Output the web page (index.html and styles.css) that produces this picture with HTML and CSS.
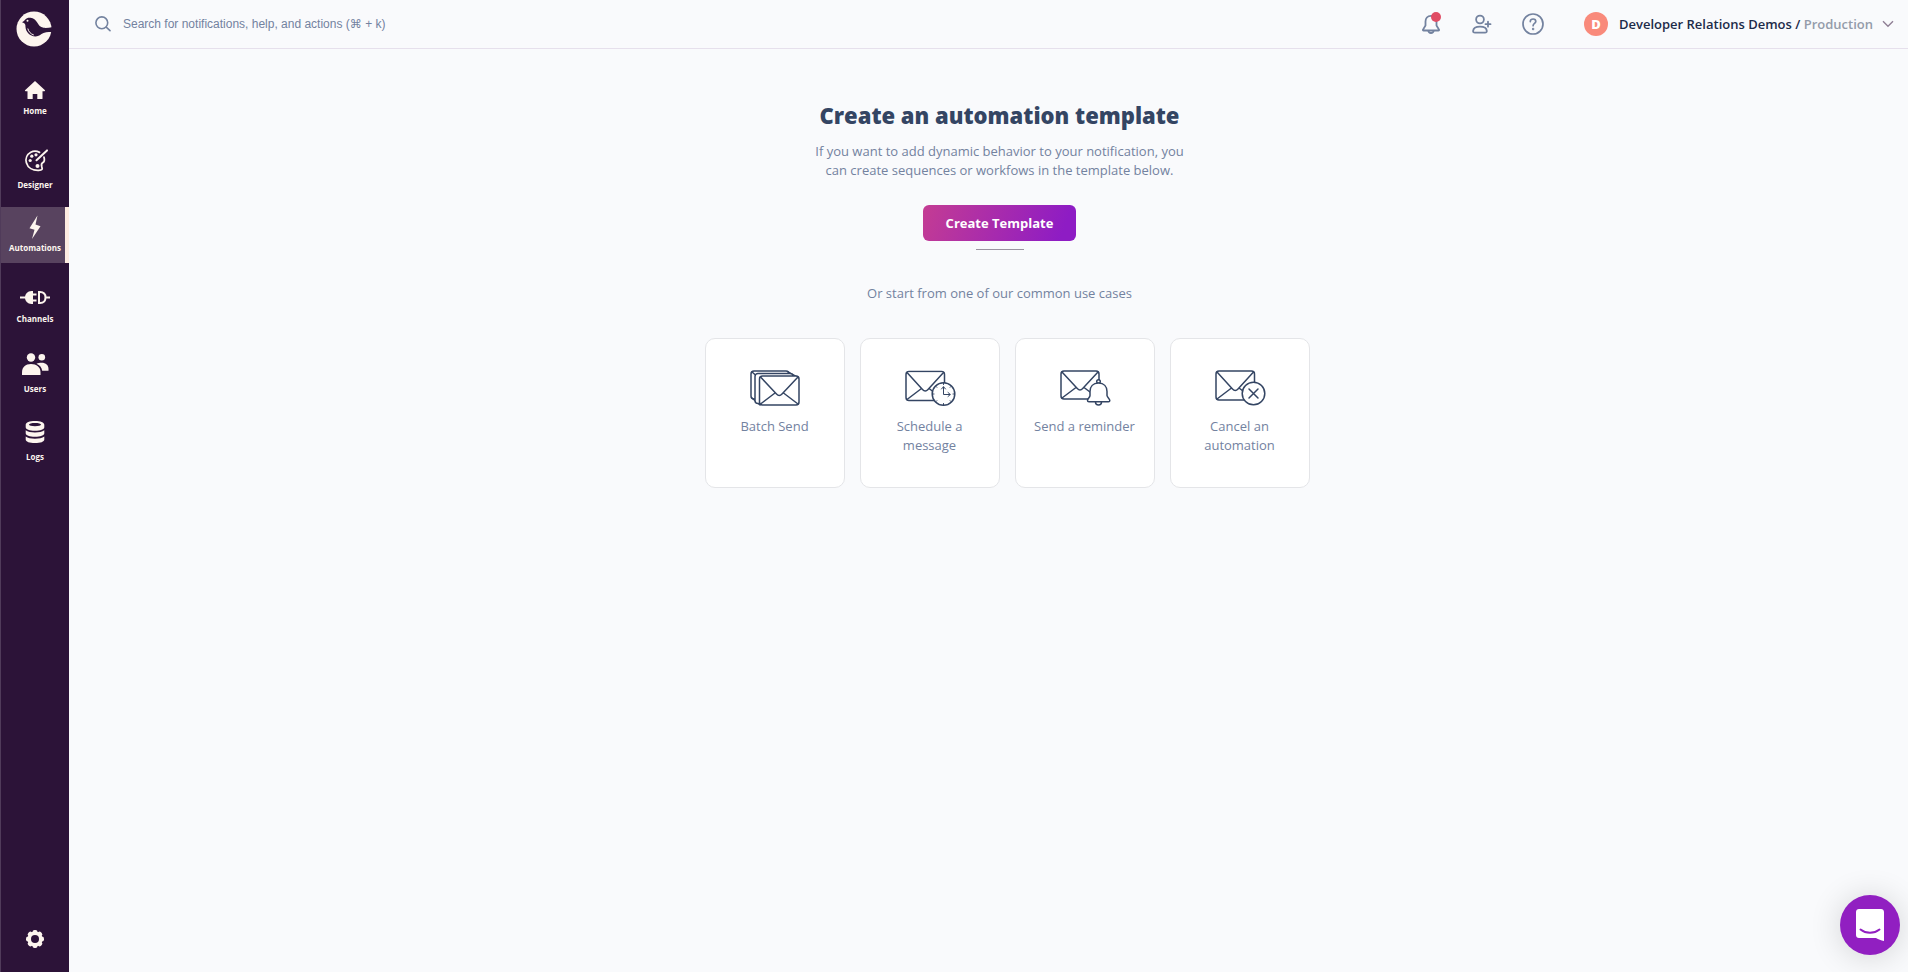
FILE: index.html
```html
<!DOCTYPE html>
<html lang="en">
<head>
  <meta charset="UTF-8">
  <title>Automations</title>
  <link rel="stylesheet" href="styles.css">
</head>
<body>

<nav class="sidebar">
  <a class="logo" href="#" aria-label="Dashboard">
    <svg width="36" height="36" viewBox="0 0 36 36">
      <circle cx="18" cy="18" r="17.5" fill="#fdf5ee"/>
      <path fill="#2c1338" d="M6 11.300c1.200-.6 2-1.200 2.800-2.300C10.300 7 12.500 6.600 14.500 6.800c3 .3 5.200 2.200 6.700 4.700 1.500 2.600 3 4.800 6.300 5.300 2.800.3 5.500-.1 8.500-.5v5c-3-.4-5.500-.4-8.500.7-3 1.200-4.500 3.600-8 3.500-5.600-.3-9.800-4.500-10-9.500-.1-1.800.4-3.400-3.500-4.700z"/>
      <circle cx="11.500" cy="9.800" r="1" fill="#fdf5ee"/>
      <path d="M11.800 17.500c.8 3.200 2.800 5.400 6 6.500" fill="none" stroke="#fdf5ee" stroke-width="1"/>
    </svg>
  </a>

  <ul class="menu">
    <li>
      <a class="menu-item" href="#">
        <svg width="24" height="24" viewBox="0 0 24 24"><path fill="currentColor" d="M12 3l10 9.300c.2.400 0 .9-.5.900H19.500V20.500c0 .4-.2.600-.6.600H14.300V16H9.700v5.100H5.100c-.4 0-.6-.2-.6-.6V13.200H2.500c-.5 0-.7-.5-.5-.9z"/></svg>
        <span>Home</span>
      </a>
    </li>
    <li>
      <a class="menu-item" href="#">
        <svg width="28" height="35" viewBox="0 0 28 35" fill="none" stroke="currentColor" stroke-width="1.800" stroke-linecap="round">
          <path d="M18.500 11.400C16 10 12.600 9.800 9.800 11.300 6 13.400 4.200 17.600 5.400 21.800c1.400 5 6.400 7.900 12.400 7.600 3.200-.2 3.900-1 3-3.600-.7-2.200-.5-3.300 1-4.200 1.800-1 1.900-3 1.200-5.400"/>
          <path d="M26 9.400L15.500 19.200" stroke-width="2"/>
          <g fill="currentColor" stroke="none"><circle cx="9.200" cy="19.500" r="1.600"/><circle cx="10.800" cy="15.200" r="1.600"/><circle cx="15" cy="13.800" r="1.600"/><circle cx="16.500" cy="25" r="2"/></g>
        </svg>
        <span>Designer</span>
      </a>
    </li>
    <li>
      <a class="menu-item active" href="#">
        <svg width="24" height="24" viewBox="0 0 24 24"><path fill="currentColor" d="M14.500.5L6.500 13.200l5 1.500L9 24 17.500 11.200l-5-1.700z"/></svg>
        <span>Automations</span>
      </a>
    </li>
    <li>
      <a class="menu-item" href="#">
        <svg width="32" height="32" viewBox="0 0 32 32" fill="none" stroke="currentColor" stroke-width="2">
          <path d="M1 19.500h6M13 16.500h4.500M13 22.500h4.500"/>
          <path fill="currentColor" stroke="none" d="M14 13v13h-1.500c-4 0-6.500-3-6.500-6.500S8.500 13 12.500 13z"/>
          <path d="M20 14v11h1c4 0 5.500-2.500 5.500-5.500S25 14 21 14zM27 19.500h4"/>
        </svg>
        <span>Channels</span>
      </a>
    </li>
    <li>
      <a class="menu-item" href="#">
        <svg width="28" height="31" viewBox="0 0 28 31" fill="currentColor">
          <circle cx="10" cy="8.500" r="4.200"/><circle cx="20.800" cy="8.300" r="3.300"/>
          <path d="M1 26v-2.500C1 18 4.500 15 10 15s9.500 3 9.500 8.500V26z"/>
          <path d="M15.500 14.800c1.500-.8 3.300-1 5-1 4.500 0 7 2.500 7 6.200v1.800h-6.300c-.5-3.200-2.300-5.600-5.700-7z"/>
        </svg>
        <span>Users</span>
      </a>
    </li>
    <li>
      <a class="menu-item" href="#">
        <svg width="22" height="29" viewBox="0 0 22 29" fill="currentColor">
          <path fill-rule="evenodd" d="M11 2c5.500 0 9.300 1.500 9.300 3.800v2.400c0 2.200-3.800 3.600-9.300 3.600s-9.300-1.400-9.300-3.600V5.800C1.700 3.500 5.500 2 11 2zm0 2C7.500 4 5 4.600 5 5.600s2.500 1.600 6 1.600 6-.6 6-1.600S14.500 4 11 4z"/>
          <path d="M1.700 11.300c2 1.500 5.300 2.200 9.300 2.200s7.300-.7 9.300-2.200v2.900c0 2.200-3.800 3.600-9.300 3.600s-9.300-1.400-9.300-3.600z"/>
          <path d="M1.700 17.500c2 1.500 5.300 2.200 9.300 2.200s7.300-.7 9.300-2.200v2.900c0 2.200-3.800 3.600-9.300 3.600s-9.300-1.400-9.300-3.600z"/>
        </svg>
        <span>Logs</span>
      </a>
    </li>
  </ul>

  <a class="settings" href="#" aria-label="Settings">
    <svg width="18" height="18" viewBox="0 0 18 18">
      <g fill="#fdf5ee">
        <circle cx="9" cy="9" r="7.600"/>
        <rect x="6.500" y="0" width="5" height="18" rx="2"/>
        <rect x="6.500" y="0" width="5" height="18" rx="2" transform="rotate(45 9 9)"/>
        <rect x="6.500" y="0" width="5" height="18" rx="2" transform="rotate(90 9 9)"/>
        <rect x="6.500" y="0" width="5" height="18" rx="2" transform="rotate(135 9 9)"/>
      </g>
      <circle cx="9" cy="9" r="4" fill="#2c1338"/>
    </svg>
  </a>
</nav>

<div class="page">
  <header class="topbar">
    <label class="search">
      <svg width="16" height="16" viewBox="0 0 16 16" fill="none" stroke="currentColor" stroke-width="1.600" stroke-linecap="round"><circle cx="6.800" cy="6.800" r="5.900"/><path d="M11.200 11.200L15 14.600"/></svg>
      <input type="text" aria-label="Search" placeholder="Search for notifications, help, and actions (⌘ + k)">
    </label>

    <div class="tools">
      <button class="icon-btn" aria-label="Notifications">
        <svg width="18" height="20" viewBox="0 0 18 20" fill="none" stroke="currentColor" stroke-width="1.800" stroke-linejoin="round">
          <path d="M9 1.800C5.300 1.800 3.500 4.500 3.500 7.500v4L1 15.600c-.2.500 0 .9.600.9h14.800c.6 0 .8-.4.600-.9l-2.500-4.100v-4C14.500 4.500 12.700 1.800 9 1.800z"/>
          <path d="M6.300 16.700c.2 1.500 1.200 2.300 2.700 2.300s2.500-.8 2.700-2.300"/>
        </svg>
        <span class="dot"></span>
      </button>
      <button class="icon-btn" aria-label="Invite people">
        <svg width="20" height="20" viewBox="0 0 20 20" fill="none" stroke="currentColor" stroke-width="1.800" stroke-linecap="round">
          <circle cx="8" cy="5.500" r="3.900"/>
          <path d="M3 18.600c-1.600 0-2-.6-1.900-1.700.3-2.600 3-4.200 6.900-4.200s6.600 1.600 6.800 4.200c.1 1.100-.4 1.700-1.800 1.700zM16 7.700v5M13.500 10.200h5"/>
        </svg>
      </button>
      <button class="icon-btn" aria-label="Help">
        <svg width="22" height="22" viewBox="0 0 22 22" fill="none" stroke="currentColor" stroke-width="1.700" stroke-linecap="round">
          <circle cx="11" cy="11" r="10"/>
          <path d="M8.300 8.600c0-1.600 1.200-2.600 2.800-2.600s2.700 1 2.700 2.500c0 1.900-2.700 2-2.700 4.200"/>
          <circle cx="11.100" cy="15.900" r=".4" fill="currentColor"/>
        </svg>
      </button>
      <button class="workspace">
        <span class="avatar">D</span>
        <span class="workspace-name">Developer Relations Demos / <span class="env">Production</span></span>
        <svg width="12" height="8" viewBox="0 0 12 8" fill="none" stroke="currentColor" stroke-width="1.400"><path d="M1 1.200l5 5 5-5"/></svg>
      </button>
    </div>
  </header>

  <main class="content">
    <h1>Create an automation template</h1>
    <p class="intro">If you want to add dynamic behavior to your notification, you<br>can create sequences or workfows in the template below.</p>
    <button class="create-btn">Create Template</button>
    <hr>
    <p class="alt">Or start from one of our common use cases</p>

    <div class="cards">
      <button class="card">
        <svg width="52" height="38" viewBox="0 0 52 38">
          <rect x="2" y="2" width="38" height="28" rx="3"/>
          <path d="M3 29l8 7M39 3l9 5M3 3l7 6" />
          <rect x="6" y="4.500" width="38" height="30" rx="3"/>
          <rect x="10.500" y="7" width="39.500" height="29" rx="3"/>
          <path d="M11.500 8l16 17c1.800 1.900 3.700 1.900 5.500 0L49 8M11.500 35l14.500-11M49 35L34.500 24"/>
        </svg>
        <span>Batch Send</span>
      </button>
      <button class="card">
        <svg width="52" height="38" viewBox="0 0 52 38">
          <rect x="2" y="2.500" width="38.500" height="29" rx="3"/>
          <path d="M3 3.500l15.500 17c1.800 1.900 3.700 1.900 5.500 0L39.500 3.500M3 30.500l14.500-11M39.500 30.500L25 19.500"/>
          <circle cx="39.500" cy="25" r="11.300"/>
          <path class="thin" d="M39.500 18v7.500H46M37.500 20l2-2.300 2 2.300M44 23.500l2.300 2-2.300 2M39.500 14v1.500M39.500 34.500V36M28.500 25H30M49 25h1.500M31.800 17.300l1 1M46.200 31.700l1 1M31.800 32.700l1-1M46.200 18.300l1-1"/>
        </svg>
        <span>Schedule a message</span>
      </button>
      <button class="card">
        <svg width="52" height="38" viewBox="0 0 52 38">
          <rect x="2" y="2" width="38" height="28" rx="3"/>
          <path d="M3 3l15.300 16.500c1.800 1.900 3.600 1.900 5.400 0L39 3M3 29l14-10.500M39 29L25 18.500"/>
          <circle cx="39.500" cy="12.500" r="1.800"/>
          <path d="M36.500 33c0 4 6 4 6 0"/>
          <path d="M39.500 14c-5.500 0-8.500 3.700-8.500 8.500v4c0 2-2.500 3-2.500 5 0 .9.500 1.300 1.500 1.300h19.500c1 0 1.300-.4 1.300-1.300 0-2-2.600-3-2.800-5v-4c0-4.800-3-8.500-8.500-8.500z"/>
        </svg>
        <span>Send a reminder</span>
      </button>
      <button class="card">
        <svg width="52" height="38" viewBox="0 0 52 38">
          <rect x="2" y="2" width="38.500" height="29" rx="3"/>
          <path d="M3 3l15.500 17c1.800 1.900 3.700 1.900 5.500 0L39.500 3M3 30l14.500-11M39.500 30L25 19"/>
          <circle cx="39.500" cy="24.500" r="11.300"/>
          <path d="M35 20l9 9M44 20l-9 9"/>
        </svg>
        <span>Cancel an automation</span>
      </button>
    </div>
  </main>
</div>

<button class="chat" aria-label="Open chat">
  <svg width="28" height="32" viewBox="0 0 28 32"><path fill="#fff" d="M3 0h22c1.700 0 3 1.300 3 3v29c-3-.6-5.500-1.700-8-3H3c-1.700 0-3-1.300-3-3V3c0-1.700 1.300-3 3-3z"/><path d="M4.500 20.500c5.500 4.400 13.500 4.400 19 0" fill="none" stroke="#911fc1" stroke-width="2" stroke-linecap="round"/></svg>
</button>

</body>
</html>
```
FILE: styles.css
```css
* {
  box-sizing: border-box;
  margin: 0;
  padding: 0;
}

body {
  display: flex;
  min-height: 100vh;
  font-family: 'Open Sans', 'Noto Sans', sans-serif;
  font-size: 13px;
  line-height: 19px;
  color: #73829f;
  background: #f9fafc;
}

button {
  font: inherit;
  color: inherit;
  border: none;
  background: none;
  cursor: pointer;
}

a {
  color: inherit;
  text-decoration: none;
}

.sidebar {
  width: 69px;
  flex-shrink: 0;
  display: flex;
  flex-direction: column;
  background: #2c1338;
  border-left: 1px solid #503b5a;
  color: #fdf5ee;
}

.logo {
  height: 70px;
  padding: 11px 0 0 15px;
}

.menu {
  list-style: none;
  display: flex;
  flex-direction: column;
  gap: 7px;
}

.menu-item {
  display: flex;
  flex-direction: column;
  align-items: center;
  gap: 3px;
  padding: 8px 0 9px;
  font-size: 8px;
  font-weight: 700;
  line-height: 12px;
}

.menu-item.active {
  background: #58435f;
  box-shadow: inset -4px 0 #fdebe0;
}

.settings {
  margin-top: auto;
  padding-bottom: 24px;
  display: flex;
  justify-content: center;
}

.settings svg,
.logo svg {
  display: block;
}

.page {
  flex: 1;
}

.topbar {
  height: 49px;
  display: flex;
  align-items: center;
  justify-content: space-between;
  padding: 0 14px 0 26px;
  border-bottom: 1px solid #e6e0ec;
}

.search {
  display: flex;
  align-items: center;
  gap: 12px;
}

.search input {
  width: 320px;
  border: none;
  outline: none;
  background: none;
  font-family: 'Liberation Sans', 'DejaVu Sans', sans-serif;
  font-size: 12px;
}

.search input::placeholder {
  color: #73829f;
}

.tools {
  display: flex;
  align-items: center;
}

.icon-btn {
  position: relative;
  width: 51px;
  height: 24px;
  display: flex;
  align-items: center;
  justify-content: center;
}

.dot {
  position: absolute;
  top: 0;
  right: 16px;
  width: 10px;
  height: 10px;
  border-radius: 50%;
  background: #e04c64;
}

.workspace {
  display: flex;
  align-items: center;
  margin-left: 25px;
  color: #8f7f95;
}

.avatar {
  width: 24px;
  height: 24px;
  border-radius: 50%;
  background: #f98a7b;
  color: #fff;
  font-weight: 800;
  line-height: 24px;
}

.workspace-name {
  margin: 0 9px 0 11px;
  font-weight: 600;
  color: #1d2b49;
}

.env {
  color: #949caa;
}

.content {
  display: flex;
  flex-direction: column;
  align-items: center;
  padding: 50px 0 40px 22px;
  text-align: center;
  font-weight: 500;
}

h1 {
  font-size: 22px;
  font-weight: 800;
  line-height: 32px;
  color: #344563;
}

.intro {
  margin-top: 11px;
}

.create-btn {
  margin-top: 25px;
  height: 36px;
  width: 153px;
  border-radius: 6px;
  background: linear-gradient(110deg, #c43c93, #8e1cc4 90%);
  color: #fff;
  font-weight: 700;
}

hr {
  width: 48px;
  margin-top: 8px;
  border: none;
  border-top: 1px solid #9a93a0;
}

.alt {
  margin-top: 34px;
}

.cards {
  display: flex;
  margin-top: 35px;
}

.card {
  width: 140px;
  height: 150px;
  margin-left: 15px;
  padding: 30px 15px 0;
  display: flex;
  flex-direction: column;
  align-items: center;
  gap: 10px;
  background: #fff;
  border: 1px solid #e4e5e8;
  border-radius: 10px;
}

.card svg {
  flex-shrink: 0;
  fill: #fff;
  stroke: #344563;
  stroke-width: 1.5;
  stroke-linejoin: round;
  stroke-linecap: round;
}

.card .thin {
  fill: none;
  stroke-width: 1;
}

.chat {
  position: fixed;
  right: 8px;
  bottom: 17px;
  width: 60px;
  height: 60px;
  display: flex;
  align-items: center;
  justify-content: center;
  border-radius: 50%;
  background: #911fc1;
  box-shadow: 0 2px 32px rgba(0, 0, 0, 0.16);
}
```
